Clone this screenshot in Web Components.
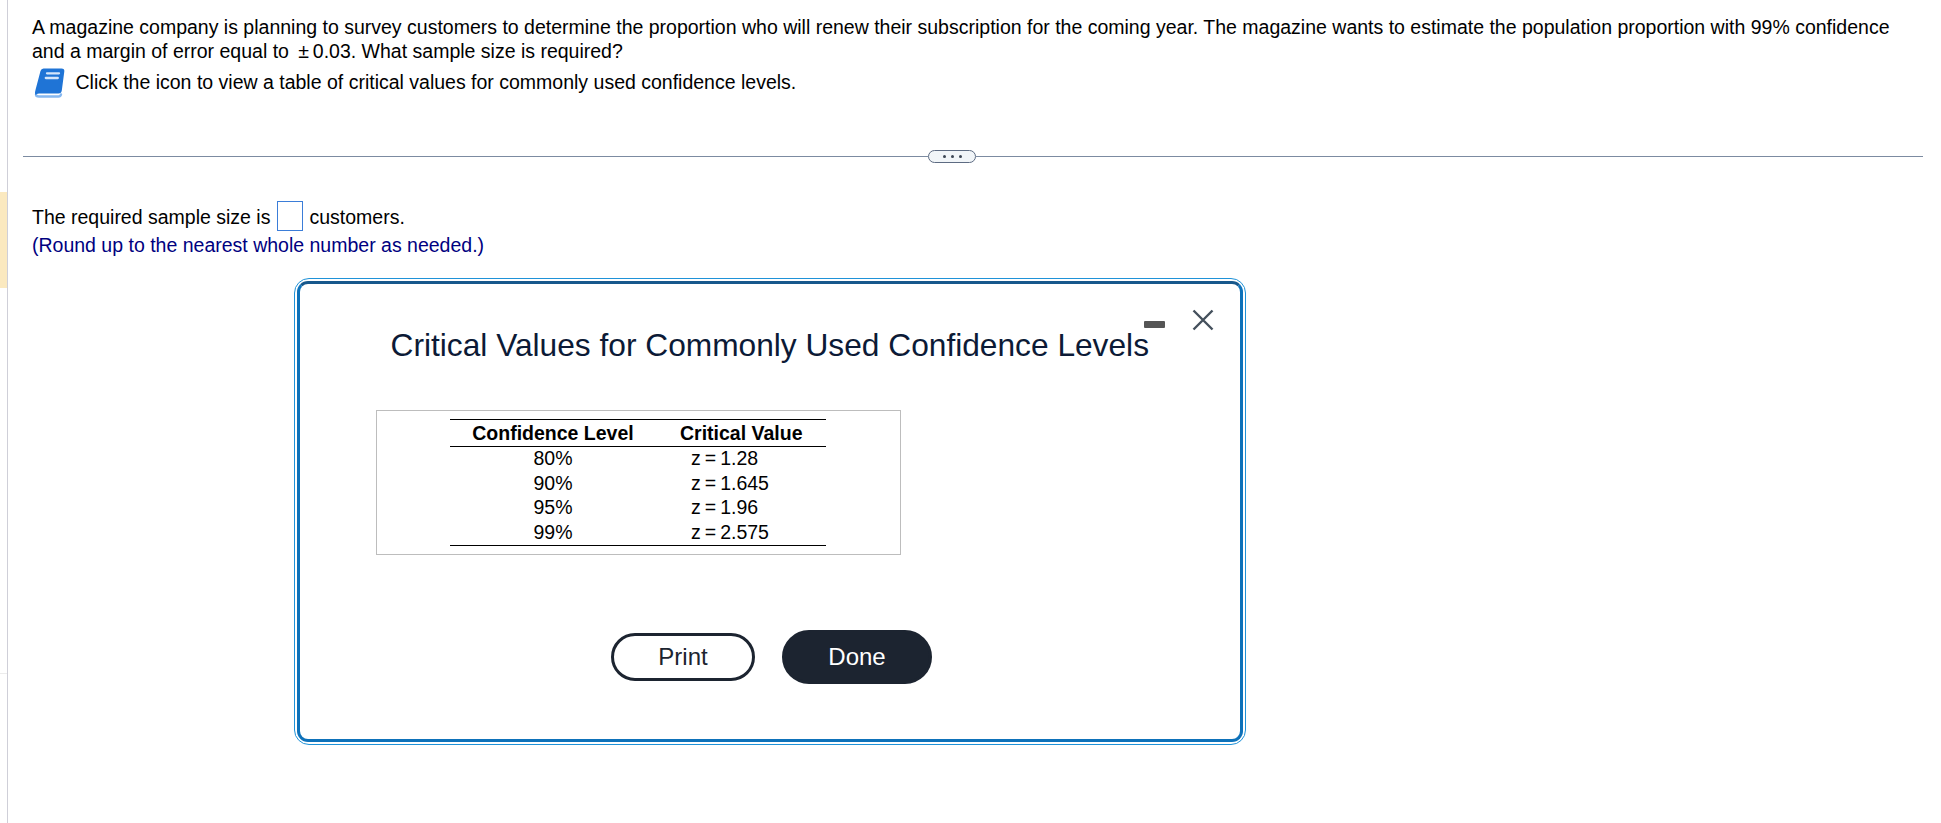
<!DOCTYPE html>
<html lang="en"><head><meta charset="utf-8"><title>Critical Values</title>
<style>
html,body{margin:0;padding:0;background:#fff;height:100%;overflow:hidden}
body{font-family:"Liberation Sans",Arial,sans-serif;color:#000}
</style></head><body>
<quiz-page>
  <quiz-question>A magazine company is planning to survey customers to determine the proportion who will renew their subscription for the coming year. The magazine wants to estimate the population proportion with 99% confidence and a margin of error equal to &#8201;±&#8201;0.03. What sample size is required?</quiz-question>
  <quiz-hint>Click the icon to view a table of critical values for commonly used confidence levels.</quiz-hint>
  <quiz-divider></quiz-divider>
  <quiz-answer></quiz-answer>
  <quiz-dialog title-text="Critical Values for Commonly Used Confidence Levels">
    <crit-table></crit-table>
  </quiz-dialog>
</quiz-page>
<script>
function def(name, html){
  customElements.define(name, class extends HTMLElement{
    constructor(){super();this.attachShadow({mode:'open'}).innerHTML=typeof html==='function'?html(this):html;}
  });
}
def('quiz-page',`<style>
:host{display:grid;grid-template-columns:8px 1fr;width:1941px;height:823px;position:relative;box-sizing:border-box;font:19.500px/24px "Liberation Sans",Arial,sans-serif;color:#000}
.rail{border-right:1px solid #cfcfd8;box-sizing:border-box;display:flex;flex-direction:column}
.band{margin-top:192px;height:96px;background:#fbe9bf}
.tick{margin-top:385px;height:1px;background:#ececec}
.main{padding:15px 18px 0 15px;display:flex;flex-direction:column;min-width:0}
</style><div class="rail"><div class="band"></div><div class="tick"></div></div><div class="main"><slot></slot></div>`);
def('quiz-question',`<style>:host{display:block;padding:0 0 0 9px;line-height:24px;margin-right:10px}</style><slot></slot>`);
def('quiz-hint',`<style>:host{display:flex;align-items:center;gap:9.500px;margin:3px 0 0 10px;height:32px}svg{flex:none;display:block}</style>
<svg width="33" height="31" viewBox="0 0 33 31"><path d="M3 27.500Q3 29.500 6 29.500H25.500Q27.500 29.500 28 27.500" fill="none" stroke="#86b8f0" stroke-width="2.400" stroke-linecap="round"/><path d="M10.500 1.500H28.500Q31.700 1.500 31.300 4.500L28.800 23.500Q28.400 26.500 25.500 26.500H6Q3.500 26.500 2.600 28L2 26.500Q2 24.500 2.600 22.500L7.500 4Q8.200 1.500 10.500 1.500Z" fill="#1f74d6"/><path d="M14 6.300H26M12.800 11H24.800" stroke="#d5e6fb" stroke-width="2.300" stroke-linecap="round"/></svg><span><slot></slot></span>`);
def('quiz-divider',`<style>:host{display:flex;align-items:center;height:14px;margin-top:51px}i{flex:1;height:1px;background:#7c8ba1}i:first-of-type{flex:none;width:905px}b{flex:none;width:48px;height:13px;box-sizing:border-box;border:1.250px solid #5d6b82;border-radius:7px;background:#f1f5f8;display:flex;align-items:center;justify-content:center;gap:5px}b u{width:3px;height:3px;border-radius:50%;background:#3c4654;display:block}</style><i></i><b><u></u><u></u><u></u></b><i></i>`);
def('quiz-answer',`<style>:host{display:block;margin:38px 0 0 9px;line-height:28px}
.line{display:flex;align-items:center;height:30px}.line span:not(.box){padding-top:2px}.box{width:26px;height:30px;box-sizing:border-box;border:1px solid #3b7dd8;margin:0 6px 0 7px;background:#fff}
.note{color:#000080;margin-top:0;line-height:28px}</style>
<div class="line"><span>The required sample size is</span><span class="box"></span><span>customers.</span></div><div class="note">(Round up to the nearest whole number as needed.)</div>`);
def('quiz-dialog',(el)=>`<style>
:host{position:absolute;left:294px;top:278px;width:952px;height:467px;box-sizing:border-box;border:1.500px solid #1f92d8;border-radius:15px;padding:2px;background:#fff}
.in{height:100%;box-sizing:border-box;border:3px solid #0e72ba;border-top-color:#17588c;border-radius:11px;background:#fff;position:relative;display:flex;flex-direction:column}
h2{margin:0;font:400 31.700px/38px "Liberation Sans",Arial,sans-serif;color:#0c1a36;padding:42px 0 0 90.500px}
.min{position:absolute;left:844px;top:37px;width:21px;height:7px;background:#555;border-radius:1px}
.x{position:absolute;left:892px;top:25px;display:block}
.body{margin:46px 0 0 76px}
.btns{display:flex;align-items:center;gap:27px;margin:75px 0 0 311px}
</style><div class="in"><h2>${el.getAttribute('title-text')}</h2><span class="min"></span>
<svg class="x" width="22" height="22" viewBox="0 0 22 22"><path d="M1.500 1.500L20.500 20.500M20.500 1.500L1.500 20.500" stroke="#44505c" stroke-width="2.400" fill="none"/></svg>
<div class="body"><slot></slot></div><div class="btns"><quiz-btn>Print</quiz-btn><quiz-btn primary>Done</quiz-btn></div></div>`);
def('quiz-btn',`<style>:host{display:flex;align-items:center;justify-content:center;box-sizing:border-box;width:144px;height:48px;border:3px solid #1c2430;border-radius:24px;font-size:24px;color:#1c2430;background:#fff}
:host([primary]){width:150px;height:54px;border-radius:27px;background:#1c2430;color:#fff}</style><slot></slot>`);
def('crit-table',`<style>:host{display:block;width:525px;height:145px;box-sizing:border-box;border:1px solid #bdbdbd;padding:8px 0 0 73px;background:#fff}
table{border-collapse:collapse;width:376px;font-size:19.500px;color:#000}
th{font-weight:700;height:26px;padding:0;border-top:1px solid #000;border-bottom:1px solid #000;line-height:24px}
td{height:22.500px;padding:0 0 2px;line-height:22.500px}
th:first-child,td:first-child{width:206px;text-align:center}
th:last-child{text-align:left;padding-left:24px}
td:last-child{text-align:left;padding-left:35px}
tr:last-child td{border-bottom:1px solid #000;height:21.500px}
.e{margin:0 4px}</style>
<table><tr><th>Confidence Level</th><th>Critical Value</th></tr>
<tr><td>80%</td><td>z<span class="e">=</span>1.28</td></tr>
<tr><td>90%</td><td>z<span class="e">=</span>1.645</td></tr>
<tr><td>95%</td><td>z<span class="e">=</span>1.96</td></tr>
<tr><td>99%</td><td>z<span class="e">=</span>2.575</td></tr></table>`);
</script>
</body></html>
